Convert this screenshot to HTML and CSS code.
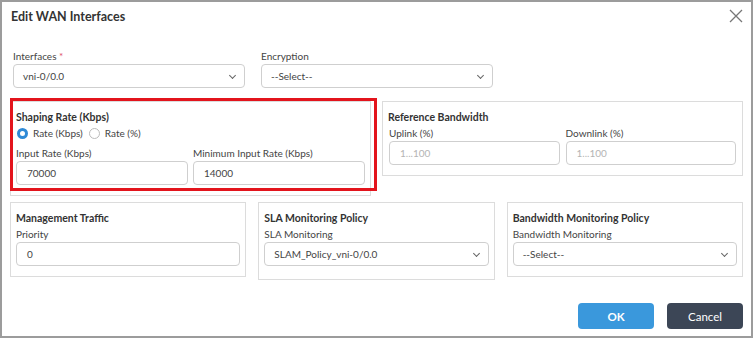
FILE: index.html
```html
<!DOCTYPE html>
<html lang="en">
<head>
    <meta charset="UTF-8">
    <meta name="viewport" content="width=device-width, initial-scale=1.0">
    <title>Edit WAN Interfaces</title>
    <link rel="stylesheet" href="styles.css">
</head>
<body>
    <div class="modal">
        <div class="modal-header">
            <h1>Edit WAN Interfaces</h1>
            <button class="close-btn" type="button" aria-label="Close">
                <svg width="14" height="14" viewBox="0 0 14 14"><path d="M1 1 L13 13 M13 1 L1 13" stroke="#777" stroke-width="1.3" fill="none"/></svg>
            </button>
        </div>

        <div class="modal-body">
            <div class="top-row">
                <div class="field">
                    <label>Interfaces <span class="req">*</span></label>
                    <div class="select">vni-0/0.0<span class="chev"></span></div>
                </div>
                <div class="field">
                    <label>Encryption</label>
                    <div class="select">--Select--<span class="chev"></span></div>
                </div>
            </div>

            <div class="card-row two">
                <div class="card shaping">
                    <div class="card-title">Shaping Rate (Kbps)</div>
                    <div class="radios">
                        <span class="radio checked"></span><span class="radio-label">Rate (Kbps)</span>
                        <span class="radio"></span><span class="radio-label">Rate (%)</span>
                    </div>
                    <div class="pair spaced">
                        <div class="field">
                            <label>Input Rate (Kbps)</label>
                            <div class="input">70000</div>
                        </div>
                        <div class="field">
                            <label>Minimum Input Rate (Kbps)</label>
                            <div class="input">14000</div>
                        </div>
                    </div>
                    <div class="highlight"></div>
                </div>
                <div class="card">
                    <div class="card-title">Reference Bandwidth</div>
                    <div class="pair wide">
                        <div class="field">
                            <label>Uplink (%)</label>
                            <div class="input placeholder">1...100</div>
                        </div>
                        <div class="field">
                            <label>Downlink (%)</label>
                            <div class="input placeholder">1...100</div>
                        </div>
                    </div>
                </div>
            </div>

            <div class="card-row three">
                <div class="card">
                    <div class="card-title">Management Traffic</div>
                    <div class="field">
                        <label>Priority</label>
                        <div class="input">0</div>
                    </div>
                </div>
                <div class="card sla">
                    <div class="card-title">SLA Monitoring Policy</div>
                    <div class="field">
                        <label>SLA Monitoring</label>
                        <div class="select">SLAM_Policy_vni-0/0.0<span class="chev"></span></div>
                    </div>
                </div>
                <div class="card">
                    <div class="card-title">Bandwidth Monitoring Policy</div>
                    <div class="field">
                        <label>Bandwidth Monitoring</label>
                        <div class="select">--Select--<span class="chev"></span></div>
                    </div>
                </div>
            </div>
        </div>

        <div class="modal-footer">
            <button class="btn btn-ok" type="button">OK</button>
            <button class="btn btn-cancel" type="button">Cancel</button>
        </div>
    </div>
</body>
</html>
```

FILE: styles.css
```css
* {
    margin: 0;
    padding: 0;
    box-sizing: border-box;
}

body {
    font-family: Lato, 'Open Sans', sans-serif;
    background: #fff;
    color: #333;
}

.modal {
    width: 753px;
    height: 338px;
    border: 2px solid #9c9c9c;
    background: #fff;
    position: relative;
}

.modal-header {
    display: flex;
    justify-content: space-between;
    align-items: center;
    height: 28px;
    padding: 0 7px 0 9px;
}

h1 {
    font-size: 12.5px;
    font-weight: 700;
    color: #333;
}

.close-btn {
    background: none;
    border: none;
    width: 16px;
    height: 16px;
    display: flex;
    align-items: center;
    justify-content: center;
}

.modal-body {
    padding: 18px 8px 0 8px;
}

.top-row {
    display: grid;
    grid-template-columns: 232px 232px;
    gap: 16px;
    margin-left: 3px;
}

label {
    display: block;
    font-size: 10px;
    line-height: 16px;
    color: #444;
}

.req {
    color: #e0506a;
}

.select,
.input {
    height: 24px;
    border: 1px solid #cfcfcf;
    border-radius: 4px;
    font-size: 10px;
    line-height: 22px;
    padding: 0 9px;
    color: #444;
    position: relative;
}

.input {
    padding: 0 10px;
}

.placeholder {
    color: #b4b4b4;
}

.chev {
    position: absolute;
    right: 9px;
    top: 8px;
    width: 5px;
    height: 5px;
    border-right: 1.3px solid #666;
    border-bottom: 1.3px solid #666;
    transform: rotate(45deg);
}

.card-row {
    display: grid;
    align-items: start;
}

.card-row.two {
    grid-template-columns: 1fr 1fr;
    gap: 11px;
    margin-top: 13px;
}

.card-row.three {
    grid-template-columns: 1fr 1fr 1fr;
    gap: 12px;
    margin-top: 6px;
}

.card {
    border: 1px solid #dcdcdc;
    padding: 7px 5px 10px 5px;
    position: relative;
}

.card.sla {
    padding-bottom: 13px;
}

.card-title {
    font-size: 10.5px;
    font-weight: 700;
    line-height: 16px;
    color: #333;
}

.pair {
    display: grid;
    grid-template-columns: 1fr 1fr;
    gap: 5px;
}

.pair.wide {
    gap: 6px;
    padding: 0 1px;
}

.pair.spaced {
    margin-top: 4px;
}

.radios {
    display: flex;
    align-items: center;
    height: 16px;
    font-size: 10px;
    color: #444;
}

.radio {
    width: 11px;
    height: 11px;
    border-radius: 50%;
    border: 1px solid #bbb;
    margin-right: 5px;
    margin-left: 1px;
}

.radio.checked {
    border: 3.5px solid #2f8ad6;
}

.radio-label {
    margin-right: 5px;
}

.highlight {
    position: absolute;
    left: -1px;
    top: -4px;
    width: 367px;
    height: 93px;
    border: 3px solid #e3141c;
}

.modal-footer {
    position: absolute;
    right: 8px;
    bottom: 7px;
    display: flex;
    gap: 13px;
}

.btn {
    width: 76px;
    height: 26px;
    border: none;
    border-radius: 4px;
    color: #fff;
    font-family: Lato, 'Open Sans', sans-serif;
    font-size: 11.5px;
    font-weight: 700;
}

.btn-ok {
    background: #3a98dc;
}

.btn-cancel {
    background: #3c4656;
    font-weight: 400;
}
```
